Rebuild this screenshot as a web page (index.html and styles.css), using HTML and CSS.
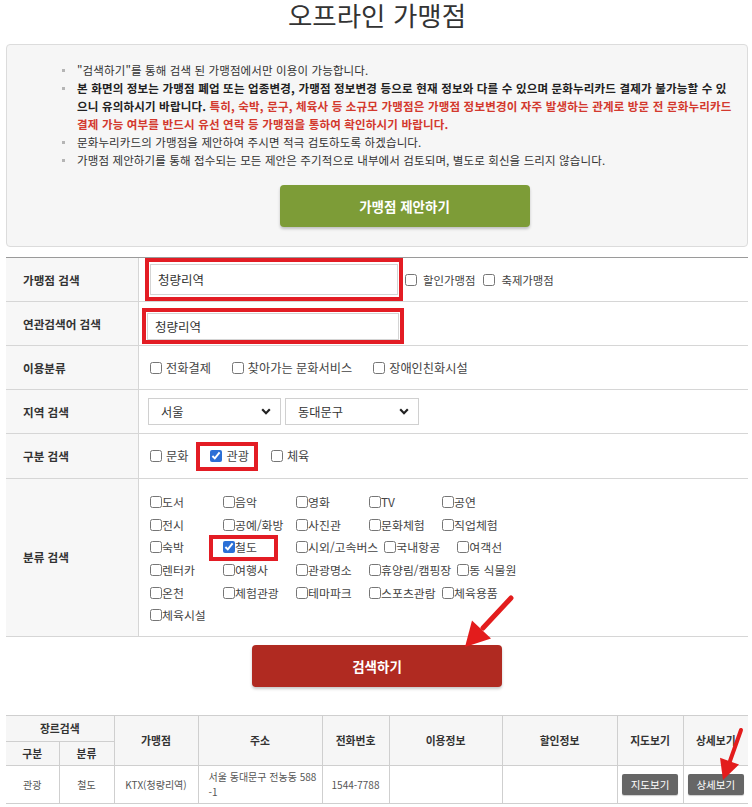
FILE: index.html
```html
<!DOCTYPE html>
<html lang="ko">
<head>
<meta charset="utf-8">
<title>오프라인 가맹점</title>
<link rel="stylesheet" href="styles.css">
</head>
<body>
<h1 class="title">오프라인 가맹점</h1>

<div class="notice">
  <ul class="notice-list">
    <li><span>"검색하기"를 통해 검색 된 가맹점에서만 이용이 가능합니다.</span></li>
    <li><span><b class="strong">본 화면의 정보는 가맹점 폐업 또는 업종변경, 가맹점 정보변경 등으로 현재 정보와 다를 수 있으며 문화누리카드 결제가 불가능할 수 있<br>으니 유의하시기 바랍니다.</b> <b class="red">특히, 숙박, 문구, 체육사 등 소규모 가맹점은 가맹점 정보변경이 자주 발생하는 관계로 방문 전 문화누리카드<br>결제 가능 여부를 반드시 유선 연락 등 가맹점을 통하여 확인하시기 바랍니다.</b></span></li>
    <li><span>문화누리카드의 가맹점을 제안하여 주시면 적극 검토하도록 하겠습니다.</span></li>
    <li><span>가맹점 제안하기를 통해 접수되는 모든 제안은 주기적으로 내부에서 검토되며, 별도로 회신을 드리지 않습니다.</span></li>
  </ul>
  <button class="btn btn-green" type="button">가맹점 제안하기</button>
</div>

<div class="form">
  <div class="frow">
    <div class="flabel">가맹점 검색</div>
    <div class="fcell cell-name">
      <span class="mark mark-name"><input class="txt txt-name" type="text" value="청량리역"></span>
      <label class="chk"><input type="checkbox">할인가맹점</label>
      <label class="chk"><input type="checkbox">축제가맹점</label>
    </div>
  </div>
  <div class="frow">
    <div class="flabel">연관검색어 검색</div>
    <div class="fcell">
      <span class="mark mark-rel"><input class="txt txt-rel" type="text" value="청량리역"></span>
    </div>
  </div>
  <div class="frow">
    <div class="flabel">이용분류</div>
    <div class="fcell cell-use">
      <label class="chk"><input type="checkbox">전화결제</label>
      <label class="chk"><input type="checkbox">찾아가는 문화서비스</label>
      <label class="chk"><input type="checkbox">장애인친화시설</label>
    </div>
  </div>
  <div class="frow">
    <div class="flabel">지역 검색</div>
    <div class="fcell cell-area">
      <div class="sel"><span>서울</span><svg width="10" height="7" viewBox="0 0 10 7"><path d="M1.2 1.3 L5 5.2 L8.8 1.3" fill="none" stroke="#222" stroke-width="2.2"/></svg></div>
      <div class="sel"><span>동대문구</span><svg width="10" height="7" viewBox="0 0 10 7"><path d="M1.2 1.3 L5 5.2 L8.8 1.3" fill="none" stroke="#222" stroke-width="2.2"/></svg></div>
    </div>
  </div>
  <div class="frow row-type">
    <div class="flabel">구분 검색</div>
    <div class="fcell cell-type">
      <label class="chk"><input type="checkbox">문화</label>
      <label class="chk mark mark-tour"><input type="checkbox" checked>관광</label>
      <label class="chk"><input type="checkbox">체육</label>
    </div>
  </div>
  <div class="frow row-cat">
    <div class="flabel">분류 검색</div>
    <div class="fcell cell-cat">
      <div class="cat-row">
        <label class="chk"><input type="checkbox">도서</label>
        <label class="chk"><input type="checkbox">음악</label>
        <label class="chk"><input type="checkbox">영화</label>
        <label class="chk"><input type="checkbox">TV</label>
        <label class="chk"><input type="checkbox">공연</label>
      </div>
      <div class="cat-row">
        <label class="chk"><input type="checkbox">전시</label>
        <label class="chk"><input type="checkbox">공예/화방</label>
        <label class="chk"><input type="checkbox">사진관</label>
        <label class="chk"><input type="checkbox">문화체험</label>
        <label class="chk"><input type="checkbox">직업체험</label>
      </div>
      <div class="cat-row">
        <label class="chk"><input type="checkbox">숙박</label>
        <label class="chk mark mark-rail"><input type="checkbox" checked>철도</label>
        <label class="chk"><input type="checkbox">시외/고속버스</label>
        <label class="chk"><input type="checkbox">국내항공</label>
        <label class="chk"><input type="checkbox">여객선</label>
      </div>
      <div class="cat-row">
        <label class="chk"><input type="checkbox">렌터카</label>
        <label class="chk"><input type="checkbox">여행사</label>
        <label class="chk"><input type="checkbox">관광명소</label>
        <label class="chk"><input type="checkbox">휴양림/캠핑장</label>
        <label class="chk"><input type="checkbox">동 식물원</label>
      </div>
      <div class="cat-row">
        <label class="chk"><input type="checkbox">온천</label>
        <label class="chk"><input type="checkbox">체험관광</label>
        <label class="chk"><input type="checkbox">테마파크</label>
        <label class="chk"><input type="checkbox">스포츠관람</label>
        <label class="chk"><input type="checkbox">체육용품</label>
      </div>
      <div class="cat-row">
        <label class="chk"><input type="checkbox">체육시설</label>
      </div>
    </div>
  </div>
</div>

<button class="btn btn-red" type="button">검색하기</button>

<table class="result">
  <colgroup>
    <col class="c1"><col class="c2"><col class="c3"><col class="c4"><col class="c5"><col class="c6"><col class="c7"><col class="c8"><col class="c9">
  </colgroup>
  <thead>
    <tr class="h1">
      <th colspan="2">장르검색</th>
      <th rowspan="2">가맹점</th>
      <th rowspan="2">주소</th>
      <th rowspan="2">전화번호</th>
      <th rowspan="2">이용정보</th>
      <th rowspan="2">할인정보</th>
      <th rowspan="2">지도보기</th>
      <th rowspan="2">상세보기</th>
    </tr>
    <tr class="h2">
      <th>구분</th>
      <th>분류</th>
    </tr>
  </thead>
  <tbody>
    <tr>
      <td>관광</td>
      <td>철도</td>
      <td>KTX(청량리역)</td>
      <td class="addr"><span class="nowrap">서울 동대문구 전농동 588</span><br>-1</td>
      <td>1544-7788</td>
      <td></td>
      <td></td>
      <td><button class="sbtn" type="button">지도보기</button></td>
      <td><button class="sbtn" type="button">상세보기</button></td>
    </tr>
  </tbody>
</table>

<svg class="arrows" width="752" height="807" viewBox="0 0 752 807">
  <line x1="511" y1="598" x2="483" y2="628" stroke="#e31c1c" stroke-width="5" stroke-linecap="round"/>
  <polygon points="465,647 491,638.5 472,620.5" fill="#e31c1c"/>
  <line x1="741" y1="730" x2="730" y2="761" stroke="#e31c1c" stroke-width="4" stroke-linecap="round"/>
  <polygon points="723,780 739,764.6 720,757.8" fill="#e31c1c"/>
</svg>
</body>
</html>
```

FILE: styles.css
```css
* { box-sizing: border-box; }

html, body { margin: 0; }

body {
  position: relative;
  padding: 0 4px 0 6px;
  font-family: "Noto Sans CJK KR", "Noto Sans", sans-serif;
  color: #333;
  background: #fff;
}

.title {
  margin: 0 0 14px;
  font-size: 26.5px;
  line-height: 30px;
  font-weight: 400;
  text-align: center;
  color: #333;
}

/* notice box */
.notice {
  background: #f6f6f6;
  border: 1px solid #dcdcdc;
  border-radius: 4px;
  padding: 16px 0 19px 55px;
}

.notice-list {
  list-style: none;
  margin: 0;
  padding: 0;
  font-size: 11.5px;
  line-height: 18px;
  letter-spacing: 0.12px;
  color: #333;
}

.notice-list li {
  display: grid;
  grid-template-columns: 15px 1fr;
}

.notice-list li::before {
  content: "";
  width: 3px;
  height: 3px;
  margin-top: 8px;
  background: #b5b5b5;
}

.strong { font-weight: 700; color: #222; letter-spacing: 0.18px; }
.red { font-weight: 700; color: #d3392e; letter-spacing: 0.18px; }

.btn {
  display: block;
  width: 250px;
  height: 42px;
  border: 0;
  border-radius: 4px;
  font-family: inherit;
  font-size: 13.5px;
  font-weight: 700;
  color: #fff;
  box-shadow: 0 2px 3px rgba(0, 0, 0, 0.22);
}

.btn-green {
  margin: 16px auto 0;
  background: #7d9c37;
}

.btn-red {
  margin: 8px auto 28px;
  background: #b02a21;
}

/* search form */
.form {
  margin-top: 10px;
  border-top: 1px solid #9a9a9a;
}

.frow {
  display: grid;
  grid-template-columns: 133px 1fr;
  min-height: 44px;
  border-bottom: 1px solid #d6d6d6;
}

.row-type { min-height: 45px; }

.flabel {
  display: flex;
  align-items: center;
  padding-left: 17px;
  background: #f7f7f7;
  border-right: 1px solid #d6d6d6;
  font-size: 11.6px;
  font-weight: 700;
  color: #333;
}

.fcell {
  display: flex;
  align-items: center;
  padding-left: 11px;
}

.chk {
  display: inline-flex;
  align-items: center;
  font-size: 12.2px;
  line-height: 16px;
  color: #444;
  white-space: nowrap;
}

.chk input {
  width: 12px;
  height: 12px;
  margin: 0 4px 0 0;
  accent-color: #2b6fd6;
}

.txt {
  border: 1px solid #d4d4d4;
  background: #fff;
  font-family: inherit;
  font-size: 12.5px;
  color: #333;
  padding: 0 7px;
  outline: none;
}

.txt-name { width: 248px; height: 31px; }
.txt-rel { width: 252px; height: 27px; }

.mark { position: relative; display: inline-flex; }

.mark::after {
  content: "";
  position: absolute;
  border: 4px solid #e31c24;
  pointer-events: none;
}

.mark-name::after { top: -6px; bottom: -6px; left: -5px; right: -5px; }
.mark-rel { margin-left: -3px; margin-top: 6px; }
.mark-rel::after { top: -5px; bottom: -4px; left: -5px; right: -5px; }
.mark-tour::after { top: -6px; bottom: -7px; left: -14px; right: -9px; }
.mark-rail::after { top: -4px; bottom: -6px; left: -14px; right: 12px; }

.cell-name .mark { margin-right: 7px; }
.cell-name .chk { margin-right: 8px; font-size: 11.4px; }
.cell-name .chk input { margin-right: 6px; }

.cell-use .chk { margin-right: 21px; }

.cell-type { gap: 22px; }

.cell-area { padding-left: 9px; gap: 4px; }

.sel {
  display: flex;
  align-items: center;
  justify-content: space-between;
  width: 133px;
  height: 27px;
  padding: 0 9px 0 12px;
  border: 1px solid #d0d0d0;
  background: #fff;
  font-size: 12.2px;
  color: #333;
}

.cell-area .sel + .sel { width: 134px; }

.cell-cat {
  flex-direction: column;
  align-items: stretch;
  padding-top: 12px;
  padding-bottom: 9px;
}

.cat-row {
  display: flex;
  align-items: center;
  height: 22.6px;
}

.cat-row .chk {
  min-width: 67px;
  margin-right: 6px;
  font-size: 11.9px;
}

.cat-row .chk input { margin-right: 0; }

/* results */
.result {
  width: 100%;
  border-collapse: collapse;
  table-layout: fixed;
  border-top: 1px solid #9a9a9a;
  font-size: 10px;
}

.c1 { width: 53px; }
.c2 { width: 55px; }
.c3 { width: 84px; }
.c4 { width: 124px; }
.c5 { width: 67px; }
.c6 { width: 113px; }
.c7 { width: 115px; }
.c8 { width: 66px; }
.c9 { width: 65px; }

.result th,
.result td {
  border: 1px solid #cfcfcf;
  padding: 0;
  text-align: center;
  vertical-align: middle;
}

.result tr > :first-child { border-left: 0; }
.result tr > :last-child { border-right: 0; }
.result .h2 > :first-child { border-left: 0; }
.result .h2 > :last-child { border-right: 1px solid #cfcfcf; }

.result th {
  background: #f6f6f6;
  font-weight: 700;
  font-size: 10.8px;
  color: #333;
}

.result .h1 th { height: 26px; }
.result .h2 th { height: 24px; }

.result td {
  height: 38px;
  color: #555;
  line-height: 15px;
}

.result td.addr {
  text-align: left;
  padding: 0 4px 0 10px;
}

.nowrap { white-space: nowrap; }

.sbtn {
  width: 56px;
  height: 21px;
  border: 0;
  border-radius: 2px;
  background: #666;
  color: #fff;
  font-family: inherit;
  font-size: 10.5px;
  padding: 0;
  box-shadow: 0 1px 1px rgba(0, 0, 0, 0.2);
}

.arrows {
  position: absolute;
  left: 0;
  top: 0;
  pointer-events: none;
}
```
